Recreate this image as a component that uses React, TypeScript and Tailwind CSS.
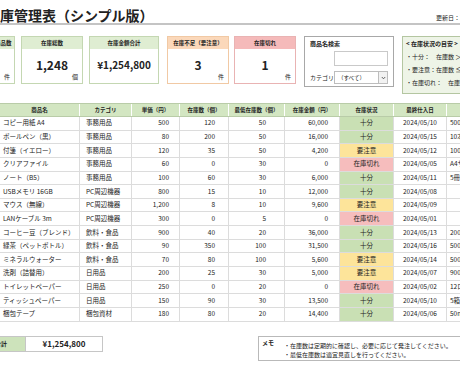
import { ReactNode } from 'react';

type Status = '十分' | '要注意' | '在庫切れ';

type Item = {
    name: string;
    cat: string;
    price: string;
    qty: string;
    min: string;
    amount: string;
    status: Status;
    date: string;
    note: string;
};

const items: Item[] = [
    { name: 'コピー用紙 A4', cat: '事務用品', price: '500', qty: '120', min: '50', amount: '60,000', status: '十分', date: '2024/05/10', note: '500枚/束' },
    { name: 'ボールペン（黒）', cat: '事務用品', price: '80', qty: '200', min: '50', amount: '16,000', status: '十分', date: '2024/05/15', note: '10本入り' },
    { name: '付箋（イエロー）', cat: '事務用品', price: '120', qty: '35', min: '50', amount: '4,200', status: '要注意', date: '2024/05/12', note: '100枚入り' },
    { name: 'クリアファイル', cat: '事務用品', price: '60', qty: '0', min: '30', amount: '0', status: '在庫切れ', date: '2024/05/05', note: 'A4サイズ' },
    { name: 'ノート（B5）', cat: '事務用品', price: '100', qty: '60', min: '30', amount: '6,000', status: '十分', date: '2024/05/11', note: '5冊セット' },
    { name: 'USBメモリ 16GB', cat: 'PC周辺機器', price: '800', qty: '15', min: '10', amount: '12,000', status: '十分', date: '2024/05/08', note: '' },
    { name: 'マウス（無線）', cat: 'PC周辺機器', price: '1,200', qty: '8', min: '10', amount: '9,600', status: '要注意', date: '2024/05/09', note: '' },
    { name: 'LANケーブル 3m', cat: 'PC周辺機器', price: '300', qty: '0', min: '5', amount: '0', status: '在庫切れ', date: '2024/05/01', note: '' },
    { name: 'コーヒー豆（ブレンド）', cat: '飲料・食品', price: '900', qty: '40', min: '20', amount: '36,000', status: '十分', date: '2024/05/13', note: '200g' },
    { name: '緑茶（ペットボトル）', cat: '飲料・食品', price: '90', qty: '350', min: '100', amount: '31,500', status: '十分', date: '2024/05/16', note: '500ml' },
    { name: 'ミネラルウォーター', cat: '飲料・食品', price: '70', qty: '80', min: '100', amount: '5,600', status: '要注意', date: '2024/05/14', note: '500ml' },
    { name: '洗剤（詰替用）', cat: '日用品', price: '200', qty: '25', min: '30', amount: '5,000', status: '要注意', date: '2024/05/07', note: '900ml' },
    { name: 'トイレットペーパー', cat: '日用品', price: '250', qty: '0', min: '20', amount: '0', status: '在庫切れ', date: '2024/05/02', note: '12ロール' },
    { name: 'ティッシュペーパー', cat: '日用品', price: '150', qty: '90', min: '30', amount: '13,500', status: '十分', date: '2024/05/10', note: '5箱パック' },
    { name: '梱包テープ', cat: '梱包資材', price: '180', qty: '80', min: '20', amount: '14,400', status: '十分', date: '2024/05/06', note: '50m' },
];

const statusBg: Record<Status, string> = {
    '十分': 'bg-[#c9e0b4]',
    '要注意': 'bg-[#fde49a]',
    '在庫切れ': 'bg-[#f6bdbd]',
};

const cols = 'grid grid-cols-[80px_52px_48px_49px_56px_55px_54px_53px_60px]';

const tones = {
    green: { box: 'border-[#c4d7b2]', head: 'bg-[#dfedd2]' },
    orange: { box: 'border-[#f1c9a4]', head: 'bg-[#fbd8ba]' },
    red: { box: 'border-[#e9b3b3]', head: 'bg-[#f5baba]' },
};

function StatCard({ label, value, unit, tone, className, small }: { label: string; value: string; unit: string; tone: keyof typeof tones; className: string; small?: boolean }) {
    return (
        <div className={`flex flex-col shrink-0 h-[48px] bg-white border ${tones[tone].box} ${className}`}>
            <div className={`h-[12px] shrink-0 flex items-center justify-center text-[5.5px] font-bold whitespace-nowrap ${tones[tone].head}`}>{label}</div>
            <div className={`flex flex-col items-center ${small ? 'pt-[11px]' : 'pt-[10px]'}`}>
                <div className={`${small ? 'text-[10px]' : 'text-[12px]'} font-bold leading-none whitespace-nowrap`}>{value}</div>
                <div className="self-end mr-[4px] mt-[3px] text-[6px] leading-none">{unit}</div>
            </div>
        </div>
    );
}

function HeadCell({ children }: { children: ReactNode }) {
    return <div className="flex items-center justify-center border-r border-white whitespace-nowrap overflow-hidden">{children}</div>;
}

export default function App() {
    return (
        <div className="w-[460px] h-[380px] overflow-hidden bg-white text-[#222] font-['Noto_Sans_CJK_JP','Noto_Sans',sans-serif]">
            {/* タイトル */}
            <div className="-ml-[14px] w-[640px] flex items-end pt-[7px] border-b-2 border-[#c4c4c4]">
                <h1 className="w-[450px] shrink-0 text-[14px] leading-[16px] font-bold">在庫管理表（シンプル版）</h1>
                <span className="text-[6px] leading-[8px] mb-[1px] whitespace-nowrap">更新日：2024/05/16</span>
            </div>

            {/* サマリー */}
            <div className="-ml-[47px] mt-[11px] flex items-start">
                <StatCard className="w-[62px]" tone="green" label="登録されている商品数" value="15" unit="件" />
                <StatCard className="w-[62px] ml-[6px]" tone="green" label="在庫総数" value="1,248" unit="個" />
                <StatCard className="w-[70px] ml-[6px]" tone="green" label="在庫金額合計" value="¥1,254,800" unit="" small />
                <StatCard className="w-[62px] ml-[8px]" tone="orange" label="在庫不足（要注意）" value="3" unit="件" />
                <StatCard className="w-[62px] ml-[5px]" tone="red" label="在庫切れ" value="1" unit="件" />

                <div className="w-[90px] h-[51px] ml-[8px] shrink-0 border border-[#a8a8a8] bg-white px-[5px] pt-[3px] text-[6px] leading-[8px]">
                    <div className="font-bold">商品名検索</div>
                    <div className="ml-[24px] mt-[3px] w-[54px] h-[15px] border border-[#c9c9c9]" />
                    <div className="flex items-center mt-[5px]">
                        <span className="w-[24px] shrink-0">カテゴリ</span>
                        <div className="w-[54px] h-[13px] shrink-0 flex border border-[#bdbdbd]">
                            <span className="flex-1 flex items-center pl-[3px] text-[5.5px]">（すべて）</span>
                            <span className="w-[9px] flex items-center justify-center border-l border-[#bdbdbd] bg-[#f2f2f2]">
                                <svg width="5" height="4" viewBox="0 0 5 4"><path d="M0.8 1 L2.5 2.8 L4.2 1" fill="none" stroke="#444" strokeWidth="0.8" /></svg>
                            </span>
                        </div>
                    </div>
                </div>

                <div className="w-[130px] h-[58px] ml-[8px] shrink-0 border border-[#b4c6a1] bg-[#eef4e7] pl-[3px] pt-[3px] text-[6px] leading-[8px] whitespace-nowrap">
                    <div className="font-bold">&lt; 在庫状況の目安 &gt;</div>
                    <div className="mt-[5px]">・十分：　在庫数 ＞ 最低在庫数</div>
                    <div className="mt-[5px]">・要注意：在庫数 ≦ 最低在庫数</div>
                    <div className="mt-[5px]">・在庫切れ：　在庫数 ＝ 0</div>
                </div>
            </div>

            {/* 在庫一覧 */}
            <div className="mt-[9px] w-[507px] text-[6.5px]">
                <div className={`${cols} h-[14px] bg-[#d3e6c2] border-y border-[#b9cca8] font-bold text-[5.5px]`}>
                    <HeadCell>商品名</HeadCell>
                    <HeadCell>カテゴリ</HeadCell>
                    <HeadCell>単価（円）</HeadCell>
                    <HeadCell>在庫数（個）</HeadCell>
                    <HeadCell>最低在庫数（個）</HeadCell>
                    <HeadCell>在庫金額（円）</HeadCell>
                    <HeadCell>在庫状況</HeadCell>
                    <HeadCell>最終仕入日</HeadCell>
                    <HeadCell>備考</HeadCell>
                </div>
                {items.map((it) => (
                    <div key={it.name} className={`${cols} h-[13.65px] border-b border-[#dcdcdc] whitespace-nowrap`}>
                        <div className="flex items-center pl-[3px] border-r border-[#dcdcdc] overflow-hidden">{it.name}</div>
                        <div className="flex items-center pl-[6px] border-r border-[#dcdcdc]">{it.cat}</div>
                        <div className="flex items-center justify-end pr-[10px] border-r border-[#dcdcdc]">{it.price}</div>
                        <div className="flex items-center justify-end pr-[13px] border-r border-[#dcdcdc]">{it.qty}</div>
                        <div className="flex items-center justify-end pr-[18px] border-r border-[#dcdcdc]">{it.min}</div>
                        <div className="flex items-center justify-end pr-[11px] border-r border-[#dcdcdc]">{it.amount}</div>
                        <div className={`flex items-center justify-center border-r border-[#dcdcdc] ${statusBg[it.status]}`}>{it.status}</div>
                        <div className="flex items-center justify-center border-r border-[#dcdcdc]">{it.date}</div>
                        <div className="flex items-center pl-[3px]">{it.note}</div>
                    </div>
                ))}
            </div>

            {/* 合計・メモ */}
            <div className="mt-[14px] -ml-[24px] flex items-start">
                <div className="flex shrink-0 h-[16px] border border-[#c6c6c6]">
                    <div className="w-[48px] flex items-center justify-center bg-[#cde3bb] text-[6px] font-bold">合計</div>
                    <div className="w-[77px] flex items-center justify-center bg-white text-[8px] font-bold border-l border-[#c6c6c6]">¥1,254,800</div>
                </div>
                <div className="ml-[155px] w-[260px] h-[25px] shrink-0 border border-[#b9b9b9] flex pl-[3px] pt-[1px] text-[6px] leading-[9px]">
                    <div className="w-[22px] shrink-0 font-bold">メモ</div>
                    <ul className="mt-[3px] whitespace-nowrap">
                        <li>・在庫数は定期的に確認し、必要に応じて発注してください。</li>
                        <li>・最低在庫数は適宜見直しを行ってください。</li>
                    </ul>
                </div>
            </div>
        </div>
    );
}
